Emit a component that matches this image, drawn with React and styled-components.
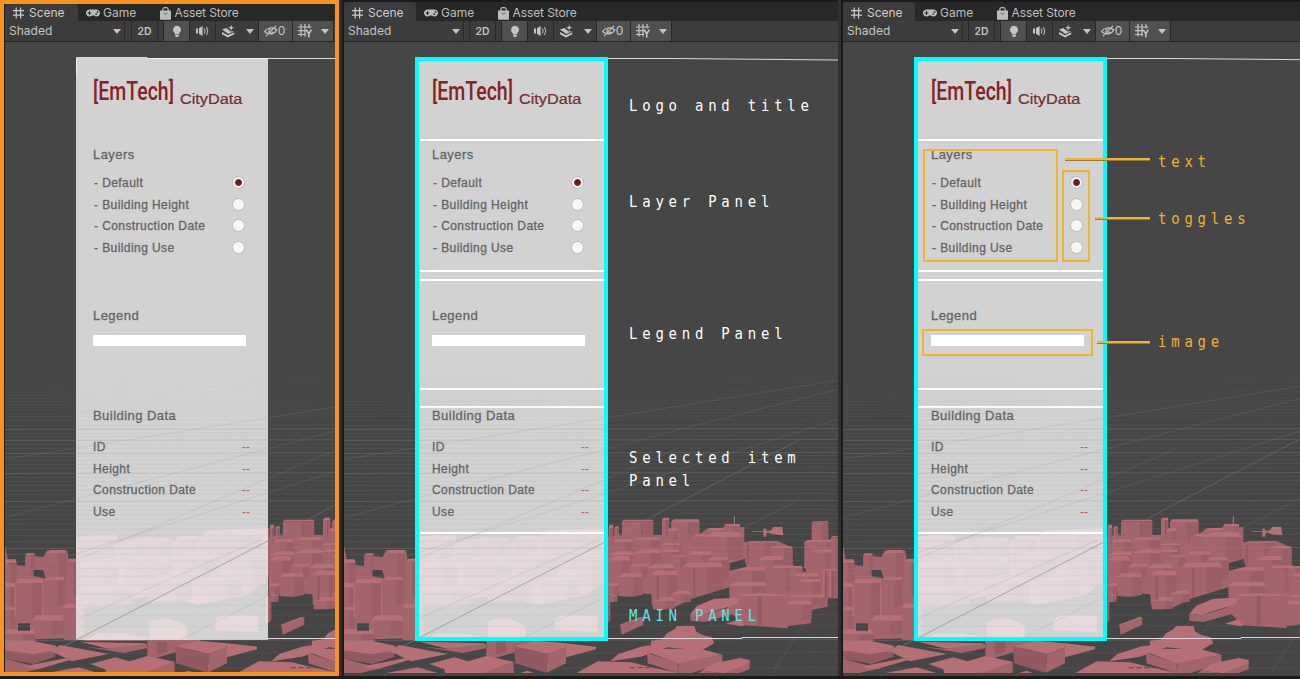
import React from 'react';
import styled, { createGlobalStyle, css } from 'styled-components';
import { FaGamepad } from 'react-icons/fa';

const GlobalStyle = createGlobalStyle`
  * { box-sizing: border-box; }
  body { margin: 0; background: #1b1b1b; overflow: hidden; }
`;

const CYAN = '#00ffff';
const AMBER = '#efb52e';

const Board = styled.main`
  display: flex;
  width: 1300px;
  height: 679px;
  background: #1b1b1b;
  overflow: hidden;
`;

const Editor = styled.section`
  flex: none;
  display: flex;
  flex-direction: column;
  width: ${(p) => p.$width}px;
  height: 676px;
  margin-right: ${(p) => p.$gap || 0}px;
  padding: 2px 0 0;
  background: #1b1b1b;
  ${(p) => p.$framed && css`
    border: 4px solid #f7931e;
    padding: 0 0 0 1px;
    box-shadow: 3px 0 0 #2e2e2e;
  `}
  ${(p) => p.$edge && css`box-shadow: 3px 0 0 #313131;`}
`;

const TabBar = styled.header`
  display: flex;
  flex: none;
  height: ${(p) => (p.$framed ? 17 : 19)}px;
  background: #282828;
  font: 12px/20px Inter, sans-serif;
`;

const Tab = styled.div`
  display: flex;
  align-items: center;
  gap: ${(p) => p.$gap}px;
  width: ${(p) => p.$width}px;
  padding-left: ${(p) => p.$pad}px;
  padding-top: ${(p) => (p.$framed ? 1 : 3)}px;
  background: ${(p) => (p.$active ? '#3c3c3c' : 'transparent')};
  color: ${(p) => (p.$active ? '#cccccc' : '#bdbdbd')};
  border-radius: 3px 3px 0 0;
  letter-spacing: ${(p) => p.$tracking || 0}px;
  white-space: nowrap;
  svg { flex: none; }
`;

const Toolbar = styled.div`
  display: flex;
  flex: none;
  height: 21px;
  background: #3c3c3c;
  border-bottom: 1px solid #262626;
  color: #c4c4c4;
  font: 12px/20px Inter, sans-serif;
`;

const Tool = styled.div`
  flex: none;
  display: flex;
  align-items: center;
  justify-content: ${(p) => p.$justify || 'center'};
  width: ${(p) => p.$width}px;
  padding: ${(p) => p.$pad || '0'};
  background: ${(p) => (p.$on ? '#505050' : 'transparent')};
  border-right: 1px solid ${(p) => (p.$plain ? 'transparent' : '#292929')};
  font-weight: ${(p) => (p.$bold ? 600 : 400)};
  font-size: ${(p) => (p.$bold ? 10.3 : 12)}px;
`;

const Viewport = styled.div`
  position: relative;
  flex: 1;
  overflow: hidden;
  background: #464646;
`;

const SceneLayer = styled.svg`
  position: absolute;
  inset: 0;
  display: block;
`;

const Panel = styled.article`
  position: absolute;
  left: 71px;
  top: 16px;
  width: 192px;
  height: 582px;
  background: rgba(242, 242, 242, 0.815);
  font-family: 'Liberation Sans', Arial, sans-serif;
  color: #646464;
`;

const Outline = styled.div`
  position: absolute;
  left: 71px;
  top: 15px;
  width: 193px;
  height: 584px;
  border: 4px solid ${CYAN};
`;

const PanelSection = styled.section`
  height: ${(p) => p.$height}px;
  margin-bottom: ${(p) => p.$gap || 0}px;
  padding: ${(p) => p.$pad}px 17px 0 16px;
  border: solid ${(p) => (p.$lined ? '#fff' : 'transparent')};
  border-width: 2px 1px;
`;

const Header = styled.div`
  display: flex;
  height: 81px;
  padding: 16px 0 0 17px;
  svg { display: block; flex: none; overflow: visible; }
`;

const Heading = styled.h2`
  margin: 0 0 ${(p) => p.$after}px;
  font-size: 13px;
  line-height: 16px;
  font-weight: 400;
  letter-spacing: 0.45px;
  -webkit-text-stroke: 0.3px #646464;
`;

const Row = styled.div`
  display: flex;
  align-items: center;
  justify-content: space-between;
  height: 21.6px;
  padding-left: ${(p) => p.$indent || 0}px;
  padding-right: ${(p) => p.$inset}px;
  font-size: 12px;
  letter-spacing: 0.42px;
  white-space: pre;
  -webkit-text-stroke: 0.3px #646464;
`;

const Radio = styled.i`
  display: block;
  width: 13px;
  height: 13px;
  margin-top: -1px;
  border: 1px solid #bcbcbc;
  border-radius: 50%;
  background: ${(p) => (p.$checked ? 'radial-gradient(circle, #6c1a20 0 2.9px, #f6efec 3.8px)' : '#f6f6f6')};
`;

const EmptyValue = styled.span`
  color: #b2616c;
  font-size: 12px;
  letter-spacing: 0;
  -webkit-text-stroke: 0;
`;

const LegendImage = styled.div`
  width: 153px;
  height: 11px;
  background: #fff;
`;

const Note = styled.div`
  position: absolute;
  left: ${(p) => p.$x}px;
  top: ${(p) => p.$y}px;
  color: ${(p) => p.$color || '#fff'};
  font: 15.8px/23px 'DejaVu Sans Mono', monospace;
  letter-spacing: 5.4px;
  white-space: pre;
  transform: scaleX(0.885);
  transform-origin: 0 50%;
`;

const Mark = styled.div`
  position: absolute;
  left: ${(p) => p.$x}px;
  top: ${(p) => p.$y}px;
  width: ${(p) => p.$w}px;
  height: ${(p) => p.$h}px;
  border: 2px solid ${AMBER};
`;

const Leader = styled.div`
  position: absolute;
  left: ${(p) => p.$x}px;
  top: ${(p) => p.$y}px;
  width: ${(p) => 307 - p.$x}px;
  height: 3px;
  border: solid #98793c;
  border-width: 0 0 1px;
  background: ${AMBER};
`;

const HashIcon = () => (
  <svg width="11" height="12" viewBox="0 0 11 12" fill="none" stroke="currentColor" strokeWidth="1.2">
    <path d="M3.2 .5v11M7.6 .5v11M0 3.6h11M0 8.2h11" />
  </svg>
);

const StoreIcon = () => (
  <svg width="11" height="13" viewBox="0 0 11 13" fill="none" stroke="currentColor">
    <path d="M0 3.4h11V12q0 .8-.8.8H.8Q0 12.8 0 12z" fill="currentColor" stroke="none" />
    <path d="M2.8 4V2.6q0-1.9 1.7-1.9h2q1.7 0 1.7 1.9V4" strokeWidth="1.2" />
    <path d="M3.6 5.6q.2 1.4 1.9 1.4t1.9-1.4" stroke="#4a4a4a" strokeWidth=".7" />
  </svg>
);

const Caret = () => (
  <svg width="8" height="5" viewBox="0 0 8 5"><path d="M0 0h8L4 5z" fill="currentColor" /></svg>
);

const BulbIcon = () => (
  <svg width="10" height="13" viewBox="0 0 10 13" fill="currentColor">
    <path d="M5 .7a4 4 0 0 0-2.4 7.2l.5 1.5h3.8l.5-1.5A4 4 0 0 0 5 .7zM3.2 10h3.6v1.2L5.8 12H4.2l-1-.8z" />
  </svg>
);

const SpeakerIcon = () => (
  <svg width="13" height="12" viewBox="0 0 13 12" fill="none" stroke="currentColor">
    <path d="M0 3.5h2v5H0zM3 3.3l3.6-2.4v10.2L3 8.7z" fill="currentColor" stroke="none" />
    <path d="M8.3 3.5q1.5 2.5 0 5M10.5 2q2.6 4 0 8" />
  </svg>
);

const EffectsIcon = () => (
  <svg width="13" height="13" viewBox="0 0 13 13" fill="currentColor">
    <path d="M0 4.4 4.2 3 6.5 4.8l2.3 1.7 3.6-.6L6.4 9z" />
    <path d="M0 7l6 3.2 6.2-3v2L6 12.4 0 9.3z" />
    <path d="m9.2 0 .8 1.9 2.4.8-2.4.9-.8 2.1-.9-2.1-2.2-.9 2.2-.8z" />
  </svg>
);

const HiddenIcon = () => (
  <svg width="14" height="12" viewBox="0 0 14 12" fill="none" stroke="currentColor" strokeWidth="1.2">
    <path d="M.6 6.5C3 2.8 8.5 1.5 12.8 4.7 10.5 9.4 4.5 10.4.6 6.5zM2 11.2 12 .8" />
    <path d="M6.8 4a2.1 2.1 0 1 0 2.2 2.6" />
  </svg>
);

const GridYIcon = () => (
  <svg width="14" height="14" viewBox="0 0 14 14" fill="none" stroke="currentColor" strokeWidth="1.2">
    <path d="M3 0v12.5M7 0v12.5M11 0v4.5M0 3h13.5M0 6.7h8M0 10.5h8" />
    <path d="m8.2 5.8 2.6 3.9 2.6-3.9M10.8 9.5v4" strokeWidth="1.6" />
  </svg>
);

/* Scene drawing. City coordinates are in thirds of a pixel. */
const TOP = '#b76f76';
const FRONT = '#a3646b';
const SIDE = '#925961';
const GAP = '#454545';

/* x, y, width, height of the front face, then the shift of the roof */
const BLOCKS = [
  [-6, 190, 50, 90, 10, 12], [70, 166, 28, 60, 4, 6], [132, 160, 60, 90, 14, 10], [195, 184, 40, 110, 8, 8],
  [0, 262, 40, 70, 6, 14], [128, 240, 60, 80, 6, 8], [40, 250, 84, 105, 8, 14], [185, 325, 60, 95, 8, 14],
  [0, 330, 40, 70, 14, 10], [90, 362, 96, 44, 14, 16], [0, 402, 100, 26, 14, 14],
  [230, 118, 110, 60, 8, 10], [350, 130, 70, 50, 20, 12], [420, 125, 90, 70, 20, 10], [520, 116, 70, 80, 10, 8],
  [600, 104, 180, 80, 20, 14], [240, 200, 110, 60, 20, 15], [370, 190, 140, 80, 30, 18], [530, 175, 120, 70, 30, 18],
  [680, 170, 110, 90, 20, 14], [230, 270, 160, 50, 30, 16], [440, 245, 130, 60, 30, 20], [600, 240, 120, 50, 40, 18],
  [843, 64, 94, 60, 6, 5], [803, 84, 14, 50, 2, 10], [820, 84, 14, 50, 4, 5], [963, 60, 22, 60, 4, 7], [990, 66, 86, 60, 8, 8],
  [980, 93, 28, 30, 4, 8], [1098, 92, 62, 30, 10, 8], [1148, 80, 50, 25, 6, 8], [815, 126, 60, 38, 10, 8], [880, 120, 80, 46, 16, 8],
  [960, 136, 60, 30, 10, 6], [1050, 110, 50, 60, 20, 8], [1082, 112, 124, 70, 36, 16], [800, 166, 80, 30, 30, 12], [875, 160, 90, 50, 30, 12],
  [960, 156, 55, 24, 10, 8], [1040, 164, 72, 34, 14, 10], [1215, 128, 90, 62, 10, 4], [1288, 145, 66, 60, 6, 6],
  [800, 182, 70, 60, 20, 14], [865, 200, 60, 36, 12, 8], [985, 172, 52, 30, 10, 6], [920, 205, 80, 50, 20, 14],
  [1100, 180, 64, 60, 12, 8], [832, 232, 74, 58, 12, 12], [1248, 180, 80, 62, 24, 12], [1022, 202, 124, 92, 18, 14],
  [932, 226, 78, 88, 14, 14], [1165, 212, 108, 60, 12, 10], [1290, 204, 72, 70, 12, 8], [1345, 206, 40, 54, 10, 8],
  [1412, 68, 50, 60, 4, 4], [1390, 126, 104, 80, 10, 6], [1412, 158, 64, 50, 16, 10], [1470, 112, 20, 95, 4, 4],
  [1350, 230, 85, 40, 18, 10], [1372, 246, 70, 40, 14, 9], [1438, 212, 54, 80, 4, 4],
  [800, 258, 32, 28, 6, 8], [1165, 258, 110, 56, 14, 12],
  [1344, 292, 108, 28, 10, 8], [1336, 314, 76, 48, 10, 12],
];

const LOW_BLOCKS = [
  [990, 282, 60, 26, 20, 10], [935, 304, 66, 24, 20, 12], [790, 288, 18, 80, 0, 0], [802, 290, 28, 16, 5, 6],
];

/* fill, polygon points */
const SLABS = [
  [FRONT, '1190,284 1230,288 1340,284 1340,385 1190,374'], [TOP, '1190,284 1260,280 1340,284 1340,288 1190,288'],
  [SIDE, '1250,288 1262,288 1262,380 1250,378'],
  [TOP, '1048,342 1068,318 1120,296 1194,293 1190,312 1110,336 1088,345'], [FRONT, '1048,342 1088,345 1190,314 1190,338 1090,366 1048,362'],
  [TOP, '1155,371 1195,358 1210,374 1205,379'], [TOP, '836,374 900,350 907,353 846,380'], [FRONT, '838,376 907,353 907,374 842,404'],
  [TOP, '0,424 90,422 162,437 160,455 96,468 0,452'], [SIDE, '0,450 92,462 160,452 160,470 95,492 0,475'],
  [TOP, '145,452 175,435 320,462 210,484'], [FRONT, '0,473 60,490 120,505 20,528 0,528'],
  [TOP, '60,500 190,475 205,480 110,507'], [TOP, '140,518 230,502 310,525 280,535 100,535'],
  [TOP, '235,425 430,430 430,438 362,450 312,445'], [FRONT, '312,446 435,432 435,445 365,459 250,440'],
  [FRONT, '436,418 600,418 560,445 460,475 436,472'], [SIDE, '465,425 495,425 495,455 465,465'],
  [TOP, '265,492 340,472 382,484 436,468 518,485 440,535 315,535 310,508'], [FRONT, '440,514 518,485 518,528 380,532'],
  [TOP, '520,438 590,422 675,430 674,443 620,462'], [SIDE, '520,439 620,462 617,518 522,490'], [FRONT, '620,462 675,443 675,490 617,518'],
  [TOP, '675,430 765,440 765,448 675,472'], [TOP, '500,530 560,512 595,525 570,535'],
  [TOP, '930,422 965,418 978,400 1000,388 1008,378 1060,378 1066,395 1085,405 1112,412 1120,430 1080,452 980,442 900,470 808,484 832,462 900,440 930,436'],
  [FRONT, '918,458 1010,490 1012,520 920,490'], [TOP, '920,456 950,446 1080,447 1144,464 1012,491'], [FRONT, '1012,490 1144,464 1144,490 1042,522 1012,522'],
  [TOP, '690,528 770,484 870,487 915,498 1055,528 1050,535 690,535'],
  [TOP, '1082,512 1120,490 1196,474 1226,480 1226,492 1150,520'], [FRONT, '1082,512 1150,520 1226,488 1226,508 1150,535 1060,530'],
];

const ROWS = [377, 379.5, 382, 384, 387, 390, 392, 395, 398, 401, 404, 407, 410, 413, 416, 420, 425, 429, 433, 436, 440, 444, 448, 453, 456, 460,
  464, 468, 473, 477, 481, 485, 490, 494, 501, 506, 510, 514, 519, 524, 529, 535, 541, 548, 554, 561, 568, 576, 585, 594, 605, 615, 626, 640, 653, 668];
const STRONG_ROWS = [429, 440, 453, 473, 501, 548, 640];

const rowOpacity = (y) => {
  if (STRONG_ROWS.includes(y)) return 0.3;
  if (y < 440) return 0.04 + (y - 377) * 0.0012;
  return 0.12;
};

function Block({ dims: [x, y, w, h, dx, dy] }) {
  const cut = x + w * 0.62;
  return (
    <g>
      <path fill={TOP} d={`M${x} ${y}l${dx} ${-dy}h${w - dx * 1.3}L${x + w} ${y}z`} />
      <path fill={FRONT} d={`M${x} ${y}H${cut}V${y + h}H${x}z`} />
      <path fill="#9a5e65" d={`M${cut} ${y}H${x + w}V${y + h * 0.9}L${cut} ${y + h}z`} />
    </g>
  );
}

function City({ width }) {
  return (
    <SceneLayer width={width} height="631" viewBox={`5 42 ${width} 631`}>
      <g transform="translate(2 500) scale(.33333)">
        <path fill={FRONT} d="M9 135l11 58 50 5v-32l55 5 10-20h60l5 28h35v235L5 420z" />
        <path fill={TOP} d="M222 112l58-7h65v22l90-15 60 12 105-15 40-20 160-5v140l-60 60-150 30-120-30-248 40z" />
        <path fill={FRONT} d="M800 110l45-5h118l117-5 20-15 110-4v45l100-3 45 20v70l40 2v-90l95-10v180h-30v25l-50 10v40l-70 8-140-10-40-40-5-60-160 60-55-15-10-30-130-15z" />
        {BLOCKS.map((dims, i) => <Block key={i} dims={dims} />)}
        <path fill={GAP} d="M95 210h28l8 25-36-6zM48 370h36v22H48zM1166 190l46-14v12l-46 22zM1165 208l50-20 2 12-50 12zM1040 300l125-38v32l-70 20-50 30-70 3 25-18zM808 300l24-12 95 12 5 22 50 9 60-30 30 10-20 75-244 5z" />
        {LOW_BLOCKS.map((dims, i) => <Block key={i} dims={dims} />)}
        {SLABS.map(([fill, points], i) => <polygon key={i} fill={fill} points={points} />)}
        <path fill={TOP} d="M1232 94h35v-8h9v7l14-2 6-10 28-1 3 26-33-3-14-6-4 5v8h-9v-14h-30zM640 360l20-14h110v50l-130-5zM440 365q60-25 115 15v40H440zM290 400h70l75 12v10H245z" />
        <path stroke="#8c8c8c" strokeWidth="3" d="M1180 48v25" />
        <path stroke={TOP} strokeWidth="4" d="M40 262v90M122 255v95M1448 214v74M1468 214v74" />
        <path stroke={SIDE} strokeWidth="6" d="M1455 216v78M1476 216v78M218 190v100M1220 135v55M950 230v70M1060 205v85" />
        <path stroke="#573f42" strokeWidth="3" d="M866 503h82" strokeDasharray="16 7" />
      </g>
      <path stroke="#d8d8d8" fill="none" d="M76.5 74V57.5H147V58.5H335L499 60M268 638.5H403V637.5H500" />
    </SceneLayer>
  );
}

function Grid({ width }) {
  return (
    <SceneLayer width={width} height="631" viewBox={`5 42 ${width} 631`} fill="none" stroke="#8d9292">
      {ROWS.map((y) => (
        <path key={y} d={`M0 ${y + 0.5}L500 ${y - 0.5}`} opacity={rowOpacity(y)} />
      ))}
      <path opacity=".2" d="M0 460 267 418 500 380M0 519 60 503 267 449 335 431 500 389M0 578 500 419M76 560 340 448M76 620 260 540M180 640 460 500M250 673 500 550M330 673 430 555M433 673 500 570" />
      <path opacity=".6" stroke="#858080" d="M50 653 76 640 268 541" />
      <path opacity=".35" d="M268 541 335 505 460 440" />
    </SceneLayer>
  );
}

function Toolbars({ framed }) {
  const off = framed ? 1 : 0;
  return (
    <>
      <TabBar $framed={framed}>
        <Tab $active $framed={framed} $width={framed ? 73 : 72} $pad={8} $gap={5} $tracking={-0.05}><HashIcon />Scene</Tab>
        <Tab $framed={framed} $width={73} $pad={8} $gap={3}><FaGamepad size={14} />Game</Tab>
        <Tab $framed={framed} $width={110} $pad={8.5} $gap={4} $tracking={-0.1}><StoreIcon />Asset Store</Tab>
      </TabBar>
      <Toolbar>
        <Tool $width={120} $justify="space-between" $pad="0 3px 0 4px">Shaded<Caret /></Tool>
        <Tool $width={6 + off} />
        <Tool $width={26} $bold>2D</Tool>
        <Tool $width={6} />
        <Tool $width={26} $on><BulbIcon /></Tool>
        <Tool $width={26}><SpeakerIcon /></Tool>
        <Tool $width={25} $plain><EffectsIcon /></Tool>
        <Tool $width={18}><Caret /></Tool>
        <Tool $width={34} $on $pad="0 2px 0 0"><HiddenIcon />0</Tool>
        <Tool $width={24} $on $plain><GridYIcon /></Tool>
        <Tool $width={17} $on><Caret /></Tool>
      </Toolbar>
    </>
  );
}

const LAYERS = ['Default', 'Building Height', 'Construction Date', 'Building Use'];
const FIELDS = ['ID', 'Height', 'Construction Date', 'Use'];

function DataPanel({ lined }) {
  return (
    <Panel>
      <Header>
        <svg width="87" height="40">
          <text transform="scale(.78 1)" x="0" y="26.5" fontFamily="Roboto" fontSize="25" fontWeight="500" fill="#862326">[EmTech]</text>
        </svg>
        <svg width="64" height="40">
          <text transform="scale(1.12 1)" x="0" y="30" fontFamily="Liberation Sans" fontSize="14.5" fill="#703034" stroke="#703034" strokeWidth=".2">CityData</text>
        </svg>
      </Header>
      <PanelSection $lined={lined} $height={133} $gap={7} $pad={6}>
        <Heading $after={9.5}>Layers</Heading>
        {LAYERS.map((name, i) => (
          <Row key={name} $indent={1} $inset={5}>{`- ${name}`}<Radio $checked={i === 0} /></Row>
        ))}
      </PanelSection>
      <PanelSection $lined={lined} $height={111} $gap={16} $pad={27}>
        <Heading $after={11}>Legend</Heading>
        <LegendImage />
      </PanelSection>
      <PanelSection $lined={lined} $height={128} $pad={0}>
        <Heading $after={12.5}>Building Data</Heading>
        {FIELDS.map((name) => (
          <Row key={name} $inset={-1.5}>{name}<EmptyValue>--</EmptyValue></Row>
        ))}
      </PanelSection>
    </Panel>
  );
}

function Scene({ width, lined, children }) {
  return (
    <Viewport>
      <City width={width} />
      <DataPanel lined={lined} />
      <Grid width={width} />
      {lined && <Outline />}
      {children}
    </Viewport>
  );
}

export default function App() {
  return (
    <>
      <GlobalStyle />
      <Board>
        <Editor $framed $width={339} $gap={5}>
          <Toolbars framed />
          <Scene width={330} />
        </Editor>
        <Editor $width={494} $gap={5} $edge>
          <Toolbars />
          <Scene width={494} lined>
            <Note $x={285} $y={52}>Logo and title</Note>
            <Note $x={285} $y={148}>Layer Panel</Note>
            <Note $x={285} $y={280}>Legend Panel</Note>
            <Note $x={285} $y={404}>{'Selected item\nPanel'}</Note>
            <Note $x={285} $y={562} $color="#5fe5e2">MAIN PANEL</Note>
          </Scene>
        </Editor>
        <Editor $width={457}>
          <Toolbars />
          <Scene width={457} lined>
            <Mark $x={80} $y={107} $w={135} $h={113} />
            <Mark $x={219} $y={128} $w={28} $h={92} />
            <Mark $x={79} $y={287} $w={171} $h={27} />
            <Leader $x={222} $y={116} />
            <Leader $x={252} $y={175} />
            <Leader $x={254} $y={299} />
            <Note $x={315} $y={108} $color={AMBER}>text</Note>
            <Note $x={315} $y={165} $color={AMBER}>toggles</Note>
            <Note $x={315} $y={288} $color={AMBER}>image</Note>
          </Scene>
        </Editor>
      </Board>
    </>
  );
}
